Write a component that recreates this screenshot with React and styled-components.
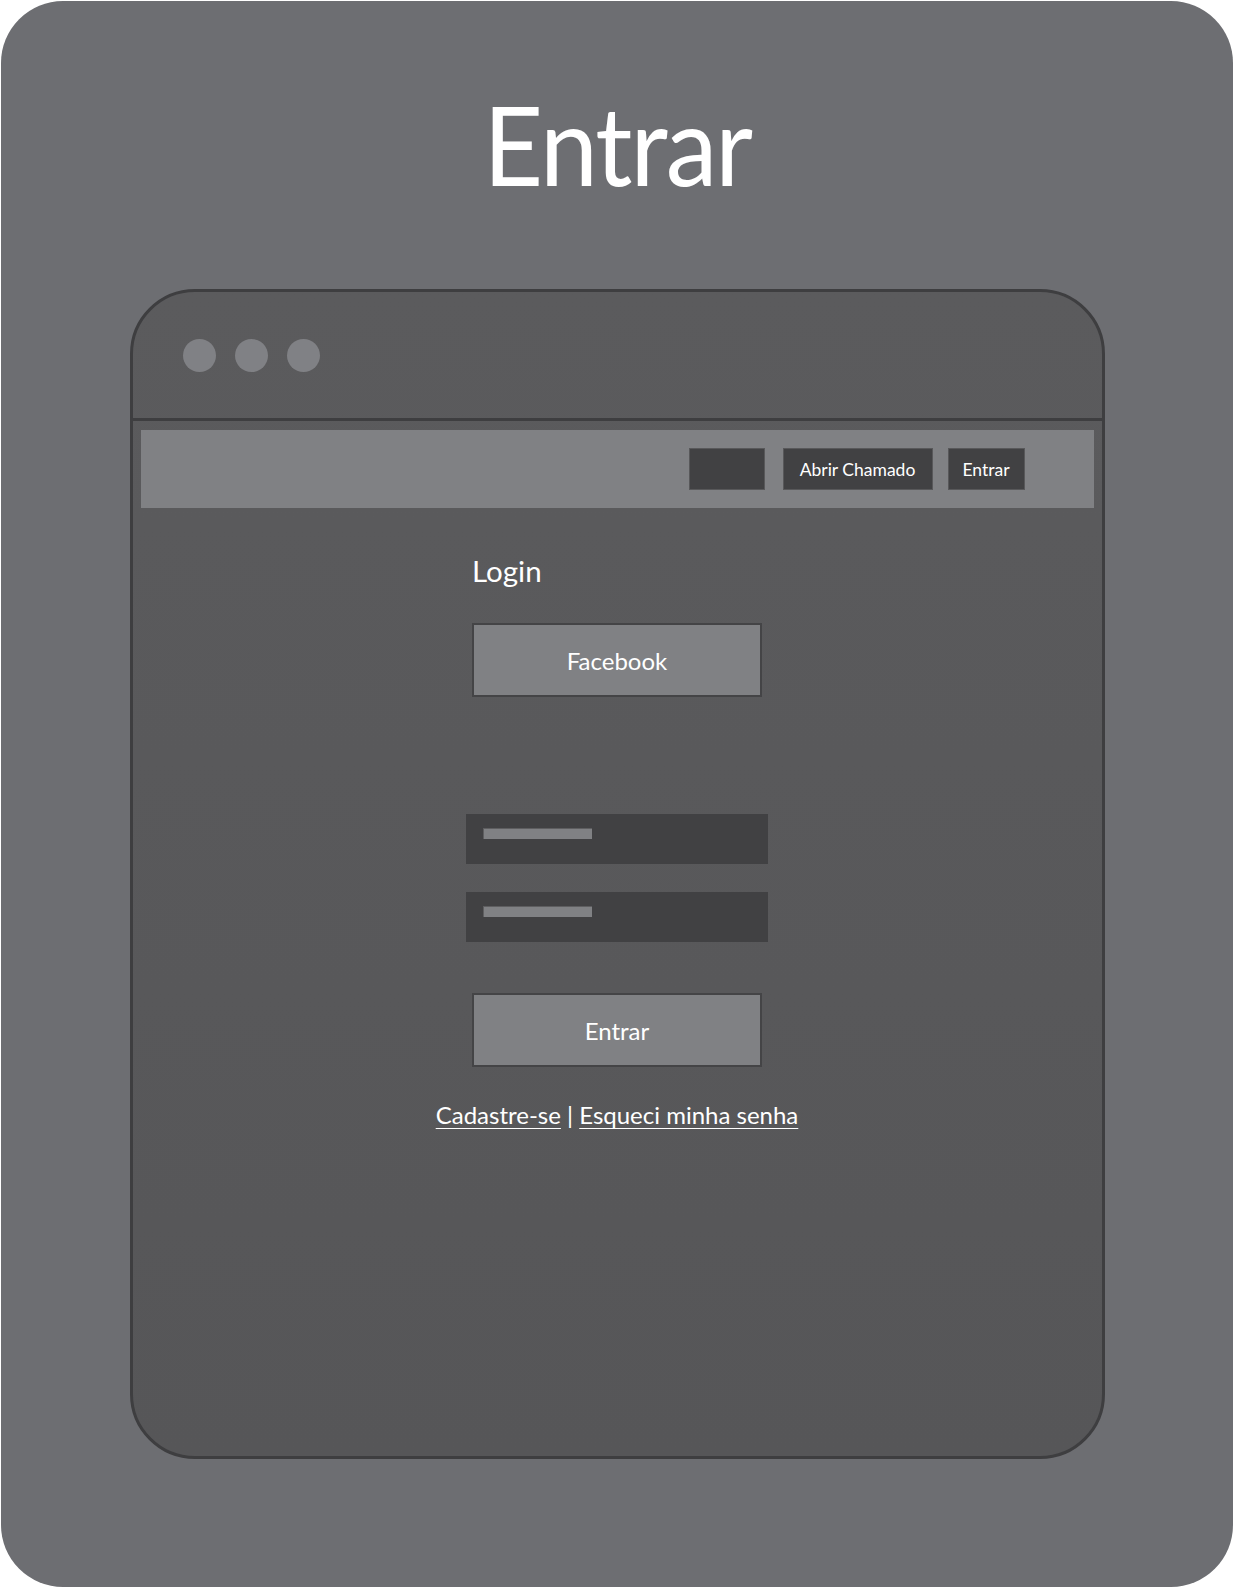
import React from "react";
import styled, { createGlobalStyle } from "styled-components";

const GlobalStyle = createGlobalStyle`
  body {
    margin: 0;
    background: #ffffff;
    font-family: Lato, "Open Sans", sans-serif;
  }
`;

const Board = styled.div`
  width: 1232px;
  height: 1586px;
  margin: 1px;
  border-radius: 62px;
  background: #6d6e72;
  display: flex;
  flex-direction: column;
  align-items: center;
  box-sizing: border-box;
`;

const PageTitle = styled.h1`
  margin: 87px 0 0;
  height: 111px;
  font-size: 111px;
  font-weight: 400;
  line-height: 1;
  letter-spacing: -2px;
  color: #ffffff;
  transform: scaleX(0.935);
`;

const Window = styled.div`
  width: 975px;
  height: 1170px;
  margin-top: 90px;
  box-sizing: border-box;
  border: 3px solid #3e3e40;
  border-radius: 65px;
  background: linear-gradient(#5b5b5d, #565658);
  display: flex;
  flex-direction: column;
  overflow: hidden;
`;

const TitleBar = styled.div`
  height: 126px;
  flex-shrink: 0;
  border-bottom: 3px solid #3e3e40;
  display: flex;
  align-items: center;
  gap: 19px;
  padding-left: 50px;
`;

const Dot = styled.span`
  width: 33px;
  height: 33px;
  border-radius: 50%;
  background: #808185;
`;

const NavBar = styled.nav`
  margin: 9px 8px 0;
  height: 78px;
  flex-shrink: 0;
  background: #808184;
  display: flex;
  justify-content: flex-end;
  align-items: center;
  padding-right: 69px;
`;

const NavButton = styled.div`
  width: ${(p) => p.$w}px;
  height: 42px;
  margin-left: ${(p) => p.$gap}px;
  box-sizing: border-box;
  background: #414143;
  border: 1px solid #58585a;
  color: #ffffff;
  font-size: 17.5px;
  display: flex;
  align-items: center;
  justify-content: center;
`;

const Content = styled.div`
  display: flex;
  flex-direction: column;
  align-items: center;
  padding-top: 45px;
`;

const Form = styled.div`
  width: 302px;
  display: flex;
  flex-direction: column;
  align-items: center;
`;

const Heading = styled.h2`
  align-self: flex-start;
  margin: 0 0 0 6px;
  font-size: 29.5px;
  font-weight: 400;
  color: #ffffff;
  line-height: 36px;
`;

const BigButton = styled.div`
  width: 290px;
  height: 74px;
  margin-top: ${(p) => p.$top}px;
  box-sizing: border-box;
  background: #808184;
  border: 2px solid #444446;
  color: #ffffff;
  font-size: 24px;
  display: flex;
  align-items: center;
  justify-content: center;
`;

const Input = styled.div`
  width: 302px;
  height: 50px;
  margin-top: ${(p) => p.$top}px;
  flex-shrink: 0;
  background: #414143;
  padding: 14px 0 0 17px;
  box-sizing: border-box;
`;

const Placeholder = styled.div`
  width: 109px;
  height: 11px;
  background: #808184;
  box-shadow: inset 1px 1px 0 #5e5e60;
`;

const Links = styled.p`
  margin: 32px 0 0;
  color: #ffffff;
  font-size: 24px;
  line-height: 32px;
  white-space: nowrap;
`;

const Link = styled.a`
  color: inherit;
  text-decoration: underline;
  text-decoration-thickness: 1px;
  text-underline-offset: 4px;
`;

export default function App() {
  return (
    <>
      <GlobalStyle />
      <Board>
        <PageTitle>Entrar</PageTitle>
        <Window>
          <TitleBar>
            <Dot />
            <Dot />
            <Dot />
          </TitleBar>
          <NavBar>
            <NavButton $w={76} $gap={0} />
            <NavButton $w={150} $gap={18}>Abrir Chamado</NavButton>
            <NavButton $w={77} $gap={15}>Entrar</NavButton>
          </NavBar>
          <Content>
            <Form>
              <Heading>Login</Heading>
              <BigButton $top={34}>Facebook</BigButton>
              <Input $top={117}>
                <Placeholder />
              </Input>
              <Input $top={28}>
                <Placeholder />
              </Input>
              <BigButton $top={51}>Entrar</BigButton>
            </Form>
            <Links>
              <Link href="#">Cadastre-se</Link> | <Link href="#">Esqueci minha senha</Link>
            </Links>
          </Content>
        </Window>
      </Board>
    </>
  );
}
